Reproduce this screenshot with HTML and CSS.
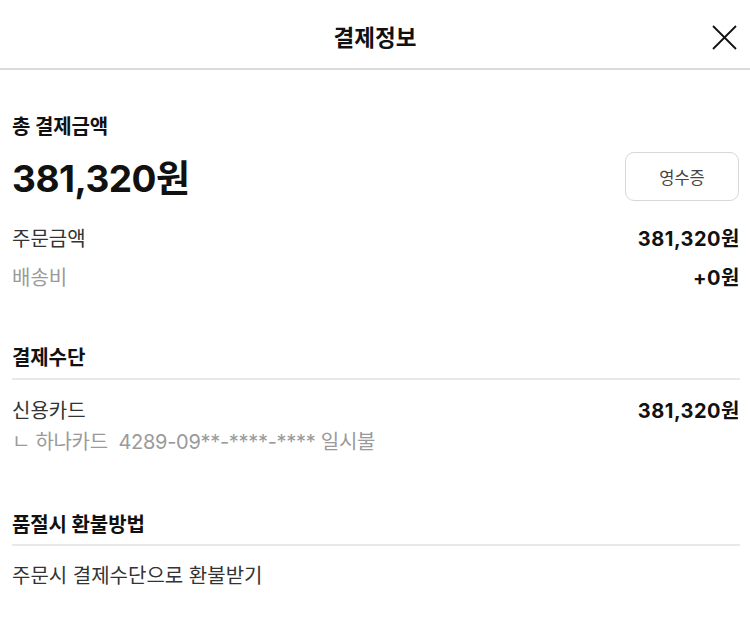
FILE: index.html
```html
<!DOCTYPE html>
<html lang="ko">
<head>
<meta charset="utf-8">
<link rel="stylesheet" href="styles.css">
</head>
<body>
<div class="sheet">
  <header class="head">
    <h1 class="title">결제정보</h1>
    <button class="close" aria-label="닫기">
      <svg width="25" height="25" viewBox="0 0 25 25"><path d="M1 1 L24 24 M24 1 L1 24" stroke="#111" stroke-width="1.8" fill="none"/></svg>
    </button>
  </header>
  <main class="body">
    <section class="total">
      <h2 class="sec-title">총 결제금액</h2>
      <div class="total-row">
        <div class="total-amount">381,320원</div>
        <button class="receipt">영수증</button>
      </div>
      <div class="row"><span class="label">주문금액</span><span class="value">381,320원</span></div>
      <div class="row"><span class="label muted">배송비</span><span class="value">+0원</span></div>
    </section>
    <section class="sec">
      <h2 class="sec-title ruled">결제수단</h2>
      <div class="row"><span class="label">신용카드</span><span class="value">381,320원</span></div>
      <div class="sub">ㄴ 하나카드&nbsp;&nbsp;4289-09**-****-**** 일시불</div>
    </section>
    <section class="sec sec-last">
      <h2 class="sec-title ruled">품절시 환불방법</h2>
      <div class="row"><span class="label">주문시 결제수단으로 환불받기</span></div>
    </section>
  </main>
</div>
</body>
</html>
```
FILE: styles.css
```css
* { box-sizing: border-box; }
html, body { margin: 0; padding: 0; background: #fff; }
body {
  font-family: Inter, "Noto Sans CJK KR", sans-serif;
  color: #111;
}
.sheet { width: 750px; }
.head {
  position: relative;
  height: 70px;
  display: flex;
  align-items: center;
  justify-content: center;
  border-bottom: 2px solid #d9dbde;
}
.title {
  margin: 0;
  font-size: 22.5px;
  font-weight: 700;
  letter-spacing: 0;
  line-height: 28px;
  padding-top: 8px;
}
.close {
  position: absolute;
  right: 13px;
  top: 25px;
  width: 25px;
  height: 25px;
  padding: 0;
  border: 0;
  background: none;
}
.close svg { display: block; }
.body { padding: 43px 10px 0 12px; }
.sec-title {
  margin: 0;
  font-size: 20px;
  font-weight: 700;
  letter-spacing: -0.1px;
  line-height: 28px;
}
.total-row {
  display: flex;
  justify-content: space-between;
  align-items: center;
  margin-top: 11px;
  margin-bottom: 17px;
}
.total-amount {
  font-size: 37px;
  font-weight: 700;
  letter-spacing: -0.5px;
  line-height: 44px;
  padding-top: 4px;
}
.receipt {
  width: 114px;
  height: 49px;
  margin-right: 1px;
  border: 1px solid #d7d7d7;
  border-radius: 9px;
  background: #fff;
  font-family: inherit;
  font-size: 16.5px;
  color: #444;
  letter-spacing: 0;
}
.row {
  display: flex;
  justify-content: space-between;
  align-items: center;
  height: 39px;
}
.label {
  font-size: 20px;
  color: #333;
  letter-spacing: 0;
}
.label.muted { color: #9a9a9a; }
.value {
  font-size: 20px;
  font-weight: 700;
  letter-spacing: 0.5px;
}
.sec { margin-top: 48px; }
.sec-last { margin-top: 56px; }
.sec-title.ruled {
  padding-bottom: 6px;
  border-bottom: 2px solid #e8e8e8;
  margin-bottom: 10px;
}
.sec-last .sec-title.ruled { padding-bottom: 5px; margin-bottom: 9px; }
.sub {
  font-size: 20px;
  color: #9a9a9a;
  letter-spacing: -0.3px;
  line-height: 26px;
}
```
